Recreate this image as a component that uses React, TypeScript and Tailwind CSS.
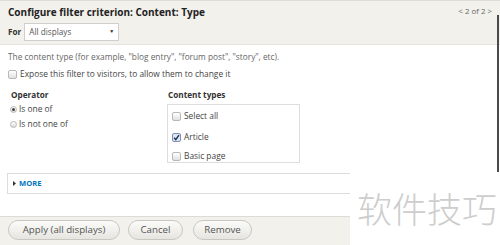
import React from 'react';

const sans = "font-['Open_Sans','Liberation_Sans',sans-serif]";

function Checkbox({ checked = false }: { checked?: boolean }) {
  return (
    <span
      className={`flex h-[9px] w-[9px] shrink-0 items-center justify-center rounded-[2px] border ${
        checked
          ? 'border-[#8090b0] bg-[#dce6f5]'
          : 'border-[#b8b8b8] bg-linear-to-b from-white to-[#e0e0e0]'
      }`}
    >
      {checked && (
        <svg viewBox="0 0 10 10" className="h-[7px] w-[7px]">
          <path d="M1.5 5.5 L4 8 L8.5 1.5" stroke="#1d2f55" strokeWidth="2" fill="none" />
        </svg>
      )}
    </span>
  );
}

function Radio({ checked = false }: { checked?: boolean }) {
  return (
    <span className="flex h-[7px] w-[7px] shrink-0 items-center justify-center rounded-full border border-[#b8b8b8] bg-linear-to-b from-white to-[#dcdcdc]">
      {checked && <span className="h-[3px] w-[3px] rounded-full bg-[#444]" />}
    </span>
  );
}

function Button({ label, width }: { label: string; width: string }) {
  return (
    <div
      className={`flex h-[20px] ${width} items-center justify-center rounded-full border border-[#c8c7c1] bg-linear-to-b from-[#fbfbf9] to-[#e6e5e0] text-[9.7px] text-[#555]`}
    >
      {label}
    </div>
  );
}

export default function App() {
  return (
    <div className={`h-[245px] w-[500px] overflow-hidden bg-white text-[#333] ${sans}`}>
      <div className="relative pb-[9px]">
        <div className="absolute right-[1px] top-[15px] bottom-0 w-[2px] bg-[#4a4a4a]" />

        <header className="border-t border-b border-t-[#dedcd6] border-b-[#e4e3de] bg-[#f2f1ec] px-2 pt-[3px] pb-[3px]">
          <div className="flex h-[16px] items-center justify-between">
            <h1 className="text-[10px] font-bold text-[#222]">Configure filter criterion: Content: Type</h1>
            <span className="text-[7.9px] text-[#666]">&lt; 2 of 2 &gt;</span>
          </div>
          <div className="mt-[3px] flex h-[18px] items-center gap-[3px]">
            <span className="text-[8.2px] font-bold">For</span>
            <div className="flex h-full w-[95px] items-center justify-between border border-[#cfcfcf] bg-white pl-[4px] pr-[4px]">
              <span className="text-[8.2px] text-[#555]">All displays</span>
              <span className="text-[5px] text-[#222]">▼</span>
            </div>
          </div>
        </header>

        <div className="px-2">
          <p className="mt-[6px] flex h-[12px] items-center text-[8.3px] text-[#666]">
            The content type (for example, "blog entry", "forum post", "story", etc).
          </p>
          <label className="mt-[5px] flex h-[12px] items-center gap-[3px] text-[8.4px] text-[#444]">
            <Checkbox />
            Expose this filter to visitors, to allow them to change it
          </label>

          <div className="mt-[9px] flex">
            <div className="w-[159px]">
              <h3 className="flex h-[12px] items-center pl-[3px] text-[8.2px] font-bold">Operator</h3>
              <label className="mt-[2px] flex h-[12px] items-center gap-[2px] pl-[2px] text-[8.4px] text-[#444]">
                <Radio checked />
                Is one of
              </label>
              <label className="mt-[3px] flex h-[12px] items-center gap-[2px] pl-[2px] text-[8.4px] text-[#444]">
                <Radio />
                Is not one of
              </label>
            </div>

            <div>
              <h3 className="flex h-[12px] items-center pl-[1px] text-[8.2px] font-bold">Content types</h3>
              <div className="mt-[3px] h-[59px] w-[133px] border border-[#dddddd] pl-[4px] pt-[5px]">
                <label className="flex h-[12px] items-center gap-[3px] text-[8.4px] text-[#444]">
                  <Checkbox />
                  Select all
                </label>
                <label className="mt-[9px] flex h-[12px] items-center gap-[3px] text-[8.4px] text-[#444]">
                  <Checkbox checked />
                  Article
                </label>
                <label className="mt-[7px] flex h-[12px] items-center gap-[3px] text-[8.4px] text-[#444]">
                  <Checkbox />
                  Basic page
                </label>
              </div>
            </div>
          </div>
        </div>
      </div>

      <div className="flex">
        <div className="w-[350px]">
          <div className="ml-[7px] mt-[1px] flex h-[21px] items-center gap-[3px] border border-r-0 border-[#dcdcdc] pl-[5px]">
            <svg viewBox="0 0 3 5" className="h-[5px] w-[3px]">
              <path d="M0 0 L3 2.5 L0 5 Z" fill="#333" />
            </svg>
            <span className="text-[7.6px] font-bold text-[#0074bd]">MORE</span>
          </div>

          <footer className="mt-[22px] flex h-[29px] border-t border-[#dcdbd5] bg-[#f2f1ec] pl-[8px] pt-[3px]">
            <Button label="Apply (all displays)" width="w-[112px]" />
            <div className="ml-[8px]">
              <Button label="Cancel" width="w-[55px]" />
            </div>
            <div className="ml-[10px]">
              <Button label="Remove" width="w-[59px]" />
            </div>
          </footer>
        </div>

        <div className="flex-1 pl-[7px] pt-[18px]">
          <span className="font-['Noto_Sans_CJK_SC',sans-serif] text-[35px] font-light leading-none text-[#cdcdcd]">
            软件技巧
          </span>
        </div>
      </div>
    </div>
  );
}
